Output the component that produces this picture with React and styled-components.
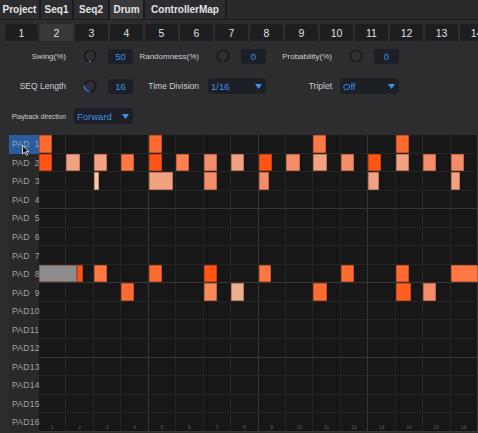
import React from 'react';
import styled, { createGlobalStyle } from 'styled-components';

const GlobalStyle = createGlobalStyle`
    *, *::before, *::after { box-sizing: border-box; }
    html, body {
        margin: 0;
        padding: 0;
        background: #2d2d2f;
    }
    body {
        font-family: "Liberation Sans", Arial, sans-serif;
        overflow: hidden;
    }
`

const Page = styled.div`
    width: 478px;
    height: 433px;
    overflow: hidden;
    background: #2d2d2f;
    display: flex;
    flex-direction: column;
`

const TabBar = styled.div`
    display: flex;
    height: 20px;
    flex-shrink: 0;
    background: #29292b;
    border-bottom: 1px solid #1b1b1d;
`
const Tab = styled.div`
    width: ${({ w }) => w}px;
    height: 100%;
    display: flex;
    align-items: center;
    justify-content: center;
    background: ${({ active }) => active ? '#3a3a3c' : '#2c2c2e'};
    border-right: 2px solid #1a1a1c;
    color: #e4e4e4;
    font-size: 10px;
    font-weight: bold;
`

const NumTabs = styled.div`
    display: flex;
    gap: 2px;
    margin-top: 4px;
    padding-left: 5px;
    height: 17px;
    flex-shrink: 0;
`
const NumTab = styled.div`
    flex: 0 0 33px;
    display: flex;
    align-items: center;
    justify-content: center;
    border-radius: 2px 2px 0 0;
    background: ${({ active }) => active ? '#38383a' : '#1e1e20'};
    color: #e0e0e0;
    font-size: 10.5px;
`

const Controls = styled.div`
    display: grid;
    grid-template-columns: 66px 67px 66px 67px 66px 67px;
    grid-auto-rows: 16px;
    row-gap: 14px;
    padding-top: 7px;
    flex-shrink: 0;
`
const Label = styled.div`
    align-self: center;
    text-align: right;
    white-space: nowrap;
    color: #cdcdcd;
    font-size: ${({ size }) => size || 8}px;
`
const Control = styled.div`
    display: flex;
    align-items: center;
    justify-content: space-between;
    padding-left: ${({ pad }) => pad ?? 9}px;
`
const KnobWrap = styled.div`
    width: 14px;
    height: 14px;
    margin-left: 8px;
    display: flex;
`
const ValueBox = styled.div`
    width: 25px;
    height: 15px;
    display: flex;
    align-items: center;
    justify-content: center;
    border-radius: 3px;
    background: #1c1f26;
    color: #3f8fe8;
    font-size: 9.5px;
`
const Dropdown = styled.div`
    flex: 1;
    height: 16px;
    display: flex;
    align-items: center;
    justify-content: space-between;
    padding: 0 4px 0 3px;
    border-radius: 3px;
    background: #1c1f26;
    color: #3f8fe8;
    font-size: 9.5px;
`

const RollArea = styled.div`
    display: flex;
    margin-top: 11px;
    padding-left: 9px;
    height: 297px;
    flex-shrink: 0;
`
const PadList = styled.div`
    width: 30px;
    display: flex;
    flex-direction: column;
    background: #29292a;
`
const PadLabel = styled.div`
    position: relative;
    height: 18.56px;
    display: flex;
    align-items: center;
    padding-left: 3px;
    font-size: 8.5px;
    letter-spacing: 0.3px;
    color: ${({ selected }) => selected ? '#86a6cf' : '#a2a2a2'};
    background: ${({ selected }) => selected ? '#2c5c9b' : 'transparent'};
`
const Pointer = styled.svg`
    position: absolute;
    left: 13px;
    top: 10px;
`
const Roll = styled.div`
    flex: 1;
    display: flex;
    flex-direction: column;
    background: #171717;
`
const RollRow = styled.div`
    position: relative;
    height: 18.56px;
    display: grid;
    grid-template-columns: repeat(16, 1fr);
    border-bottom: 1px solid ${({ group }) => group ? '#373737' : '#252525'};
`
const Cell = styled.div`
    display: flex;
    align-items: flex-end;
    justify-content: center;
    border-right: 1px solid ${({ beat }) => beat ? '#373737' : '#252525'};
    color: #5c5c5c;
    font-size: 5px;
    padding-bottom: 1px;
`
const Note = styled.div`
    position: absolute;
    top: 0;
    bottom: 0;
    background: ${({ color }) => color};
    box-shadow: inset 0 0 0 1px rgba(110, 30, 0, 0.35);
    border-radius: 1px;
`

const hot = '#ff6a30'
const deep = '#ff5414'
const orange = '#ff7844'
const salmon = '#f48e6a'
const light = '#f0a282'
const pale = '#f4c8a8'

// [column, length in columns, colour]
const notes = {
    0: [[0, 0.48, hot], [4, 0.5, hot], [10, 0.45, orange], [13, 0.48, hot]],
    1: [
        [0, 0.48, deep], [1, 0.48, light], [2, 0.48, light], [3, 0.48, orange],
        [4, 0.5, deep], [5, 0.48, '#ff8050'], [6, 0.48, salmon], [7, 0.48, light],
        [8, 0.48, deep], [9, 0.52, salmon], [10, 0.48, light], [11, 0.48, salmon],
        [12, 0.46, deep], [13, 0.48, light], [14, 0.48, salmon], [15, 0.48, salmon],
    ],
    2: [[2, 0.2, pale], [4, 0.89, light], [6, 0.48, salmon], [8, 0.4, salmon], [12, 0.4, light], [15, 0.36, light]],
    7: [
        [0, 1.37, '#8c8c8c'], [1.37, 0.24, deep], [2, 0.48, orange], [4, 0.5, hot],
        [6, 0.48, deep], [8, 0.46, orange], [11, 0.48, hot], [13, 0.48, hot], [15, 1, orange],
    ],
    8: [[3, 0.48, hot], [6, 0.48, '#f88a58'], [7, 0.48, '#ecb090'], [10, 0.48, hot], [13, 0.57, '#ff6020'], [14, 0.48, salmon]],
}

function arcPath(a0, a1) {
    const r = 5.6
    const rad = d => d * Math.PI / 180
    const x0 = 7 + r * Math.cos(rad(a0)), y0 = 7 + r * Math.sin(rad(a0))
    const x1 = 7 + r * Math.cos(rad(a1)), y1 = 7 + r * Math.sin(rad(a1))
    return `M${x0.toFixed(2)} ${y0.toFixed(2)} A${r} ${r} 0 ${a1 - a0 > 180 ? 1 : 0} 1 ${x1.toFixed(2)} ${y1.toFixed(2)}`
}

function Knob({ from, to, color }) {
    return (
        <KnobWrap>
            <svg width="14" height="14" viewBox="0 0 14 14">
                <circle cx="7" cy="7" r="5.6" fill="#2f2f31" stroke="#151517" strokeWidth="1.4" />
                <path d={arcPath(from, to)} fill="none" stroke={color} strokeWidth="1.5" />
            </svg>
        </KnobWrap>
    )
}

function Arrow() {
    return (
        <svg width="7" height="5" viewBox="0 0 7 5">
            <path d="M0 0H7L3.5 5Z" fill="#3f8fe8" />
        </svg>
    )
}

const pads = Array.from({ length: 16 }, (_, i) => i < 9 ? `PAD\u2007${i + 1}` : `PAD${i + 1}`)

export default function App() {
    return (
        <Page>
            <GlobalStyle />
            <TabBar>
                <Tab w={41}>Project</Tab>
                <Tab w={33}>Seq1</Tab>
                <Tab w={36}>Seq2</Tab>
                <Tab w={35} active>Drum</Tab>
                <Tab w={82}>ControllerMap</Tab>
            </TabBar>
            <NumTabs>
                {Array.from({ length: 14 }, (_, i) => (
                    <NumTab key={i} active={i === 1}>{i + 1}</NumTab>
                ))}
            </NumTabs>
            <Controls>
                <Label>Swing(%)</Label>
                <Control>
                    <Knob from={80} to={100} color="#2f7fd8" />
                    <ValueBox>50</ValueBox>
                </Control>
                <Label>Randomness(%)</Label>
                <Control>
                    <Knob from={85} to={95} color="#1f4f88" />
                    <ValueBox>0</ValueBox>
                </Control>
                <Label>Probability(%)</Label>
                <Control>
                    <Knob from={85} to={95} color="#1f4f88" />
                    <ValueBox>0</ValueBox>
                </Control>

                <Label size={8.5}>SEQ Length</Label>
                <Control>
                    <Knob from={95} to={190} color="#2f7fd8" />
                    <ValueBox>16</ValueBox>
                </Control>
                <Label size={8.5}>Time Division</Label>
                <Control>
                    <Dropdown>1/16<Arrow /></Dropdown>
                </Control>
                <Label size={8.5}>Triplet</Label>
                <Control pad={8}>
                    <Dropdown>Off<Arrow /></Dropdown>
                </Control>

                <Label size={6.7}>Playback direction</Label>
                <Control pad={8}>
                    <Dropdown>Forward<Arrow /></Dropdown>
                </Control>
            </Controls>
            <RollArea>
                <PadList>
                    {pads.map((name, i) => (
                        <PadLabel key={name} selected={i === 0}>
                            {name}
                            {i === 0 && (
                                <Pointer width="8" height="11" viewBox="0 0 8 11">
                                    <path d="M0.5 0.5V9L2.6 7.1L4.2 10.4L5.6 9.8L4 6.6H6.9Z" fill="#111" stroke="#eee" strokeWidth="0.8" />
                                </Pointer>
                            )}
                        </PadLabel>
                    ))}
                </PadList>
                <Roll>
                    {pads.map((name, r) => (
                        <RollRow key={name} group={r % 4 === 3}>
                            {Array.from({ length: 16 }, (_, c) => (
                                <Cell key={c} beat={c % 4 === 3}>{r === 15 ? c + 1 : null}</Cell>
                            ))}
                            {(notes[r] || []).map(([col, len, color], k) => (
                                <Note
                                    key={k}
                                    color={color}
                                    style={{ left: `${col / 16 * 100}%`, width: `${len / 16 * 100}%` }}
                                />
                            ))}
                        </RollRow>
                    ))}
                </Roll>
            </RollArea>
        </Page>
    )
}
